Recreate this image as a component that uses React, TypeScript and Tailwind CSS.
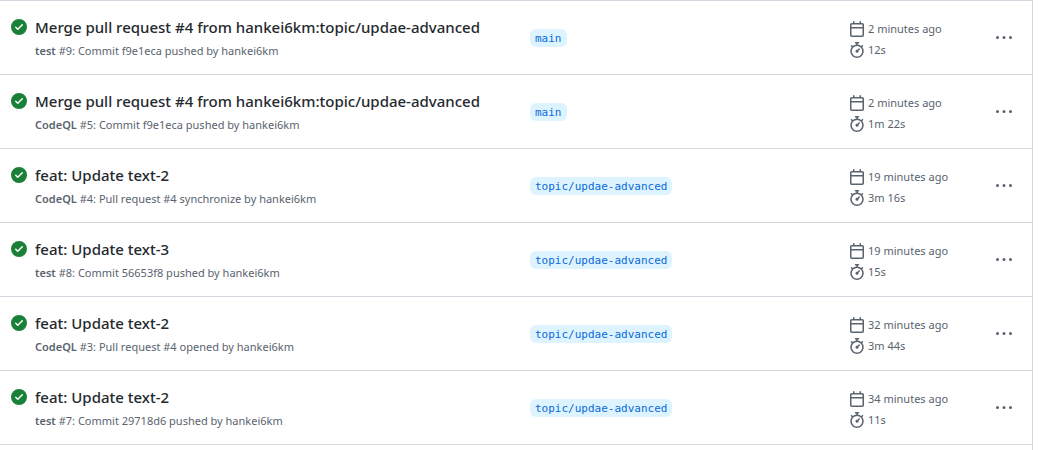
interface Run {
  title: string;
  workflow: string;
  detail: string;
  branch: string;
  ago: string;
  duration: string;
}

const MERGE = 'Merge pull request #4 from hankei6km:topic/updae-advanced';
const TOPIC = 'topic/updae-advanced';

const RUNS: Run[] = [
  { title: MERGE, workflow: 'test', detail: '#9: Commit f9e1eca pushed by hankei6km', branch: 'main', ago: '2 minutes ago', duration: '12s' },
  { title: MERGE, workflow: 'CodeQL', detail: '#5: Commit f9e1eca pushed by hankei6km', branch: 'main', ago: '2 minutes ago', duration: '1m 22s' },
  { title: 'feat: Update text-2', workflow: 'CodeQL', detail: '#4: Pull request #4 synchronize by hankei6km', branch: TOPIC, ago: '19 minutes ago', duration: '3m 16s' },
  { title: 'feat: Update text-3', workflow: 'test', detail: '#8: Commit 56653f8 pushed by hankei6km', branch: TOPIC, ago: '19 minutes ago', duration: '15s' },
  { title: 'feat: Update text-2', workflow: 'CodeQL', detail: '#3: Pull request #4 opened by hankei6km', branch: TOPIC, ago: '32 minutes ago', duration: '3m 44s' },
  { title: 'feat: Update text-2', workflow: 'test', detail: '#7: Commit 29718d6 pushed by hankei6km', branch: TOPIC, ago: '34 minutes ago', duration: '11s' },
];

const ICONS = {
  check: 'M8 16A8 8 0 1 1 8 0a8 8 0 0 1 0 16Zm3.78-9.72a.751.751 0 0 0-.018-1.042.751.751 0 0 0-1.042-.018L6.75 9.19 5.28 7.72a.751.751 0 0 0-1.042.018.751.751 0 0 0-.018 1.042l2 2a.75.75 0 0 0 1.06 0Z',
  calendar: 'M4.75 0a.75.75 0 0 1 .75.75V2h5V.75a.75.75 0 0 1 1.5 0V2h1.25c.966 0 1.75.784 1.75 1.75v10.5A1.75 1.75 0 0 1 13.25 16H2.75A1.75 1.75 0 0 1 1 14.25V3.75C1 2.784 1.784 2 2.75 2H4V.75A.75.75 0 0 1 4.75 0ZM2.5 7.5v6.75c0 .138.112.25.25.25h10.5a.25.25 0 0 0 .25-.25V7.5Zm10.75-4H2.75a.25.25 0 0 0-.25.25V6h11V3.75a.25.25 0 0 0-.25-.25Z',
  stopwatch: 'M5.75.75A.75.75 0 0 1 6.5 0h3a.75.75 0 0 1 0 1.5h-.75v1l-.001.041a6.724 6.724 0 0 1 3.464 1.435l.007-.006.75-.75a.749.749 0 0 1 1.275.326.749.749 0 0 1-.215.734l-.75.75-.006.007a6.75 6.75 0 1 1-10.548 0L2.72 5.03l-.75-.75a.751.751 0 0 1 .018-1.042.751.751 0 0 1 1.042-.018l.75.75.007.006A6.72 6.72 0 0 1 7.25 2.541V1.5H6.5a.75.75 0 0 1-.75-.75ZM8 14.5a5.25 5.25 0 1 0-.001-10.501A5.25 5.25 0 0 0 8 14.5Zm.389-6.7 1.33-1.33a.75.75 0 1 1 1.061 1.06L9.45 8.861A1.503 1.503 0 0 1 8 10.75a1.499 1.499 0 1 1 .389-2.95Z',
  kebab: 'M8 9a1.5 1.5 0 1 0 0-3 1.5 1.5 0 0 0 0 3ZM1.5 9a1.5 1.5 0 1 0 0-3 1.5 1.5 0 0 0 0 3Zm13 0a1.5 1.5 0 1 0 0-3 1.5 1.5 0 0 0 0 3Z',
};

function Icon({ name, className }: { name: keyof typeof ICONS; className?: string }) {
  return (
    <svg viewBox="0 0 16 16" width="16" height="16" fill="currentColor" aria-hidden="true" className={className}>
      <path d={ICONS[name]}/>
    </svg>
  );
}

function RunRow({ run }: { run: Run }) {
  return (
    <li className="flex items-start border-b border-[#d0d7de] pt-4 pb-3 pl-[11px] pr-5">
      {/* Status + title */}
      <div className="flex flex-1 min-w-0 gap-2">
        <Icon name="check" className="mt-[2px] shrink-0 text-[#1a7f37]"/>
        <div className="min-w-0">
          <a href="#" className="block truncate text-[15px] leading-5 font-medium text-[#25292e]">{run.title}</a>
          <p className="mt-1 truncate text-[11px] leading-5 text-[#59636e]">
            <span className="font-semibold">{run.workflow}</span> {run.detail}
          </p>
        </div>
      </div>

      {/* Branch */}
      <div className="flex w-[319px] shrink-0 pt-3">
        <a href="#" className="rounded-md bg-[#ddf4ff] px-[5px] pt-px text-[11px] leading-[17px] text-[#0969da] font-['DejaVu_Sans_Mono','Liberation_Mono',monospace]">
          {run.branch}
        </a>
      </div>

      {/* Time */}
      <div className="flex flex-col gap-px w-[147px] shrink-0 py-[2px] text-[11px] leading-5 text-[#59636e]">
        <div className="flex items-center gap-[3px]"><Icon name="calendar"/>{run.ago}</div>
        <div className="flex items-center gap-[3px]"><Icon name="stopwatch"/>{run.duration}</div>
      </div>

      <button type="button" aria-label="Show options" className="shrink-0 pt-[13px] text-[#59636e]">
        <Icon name="kebab"/>
      </button>
    </li>
  );
}

export default function App() {
  return (
    <main className="bg-white pr-[5px] font-['Noto_Sans','Open_Sans',sans-serif]">
      <ul className="border-t border-r border-[#d0d7de]">
        {RUNS.map((run, i) => <RunRow key={i} run={run}/>)}
        <li className="h-[5px]"/>
      </ul>
    </main>
  );
}
